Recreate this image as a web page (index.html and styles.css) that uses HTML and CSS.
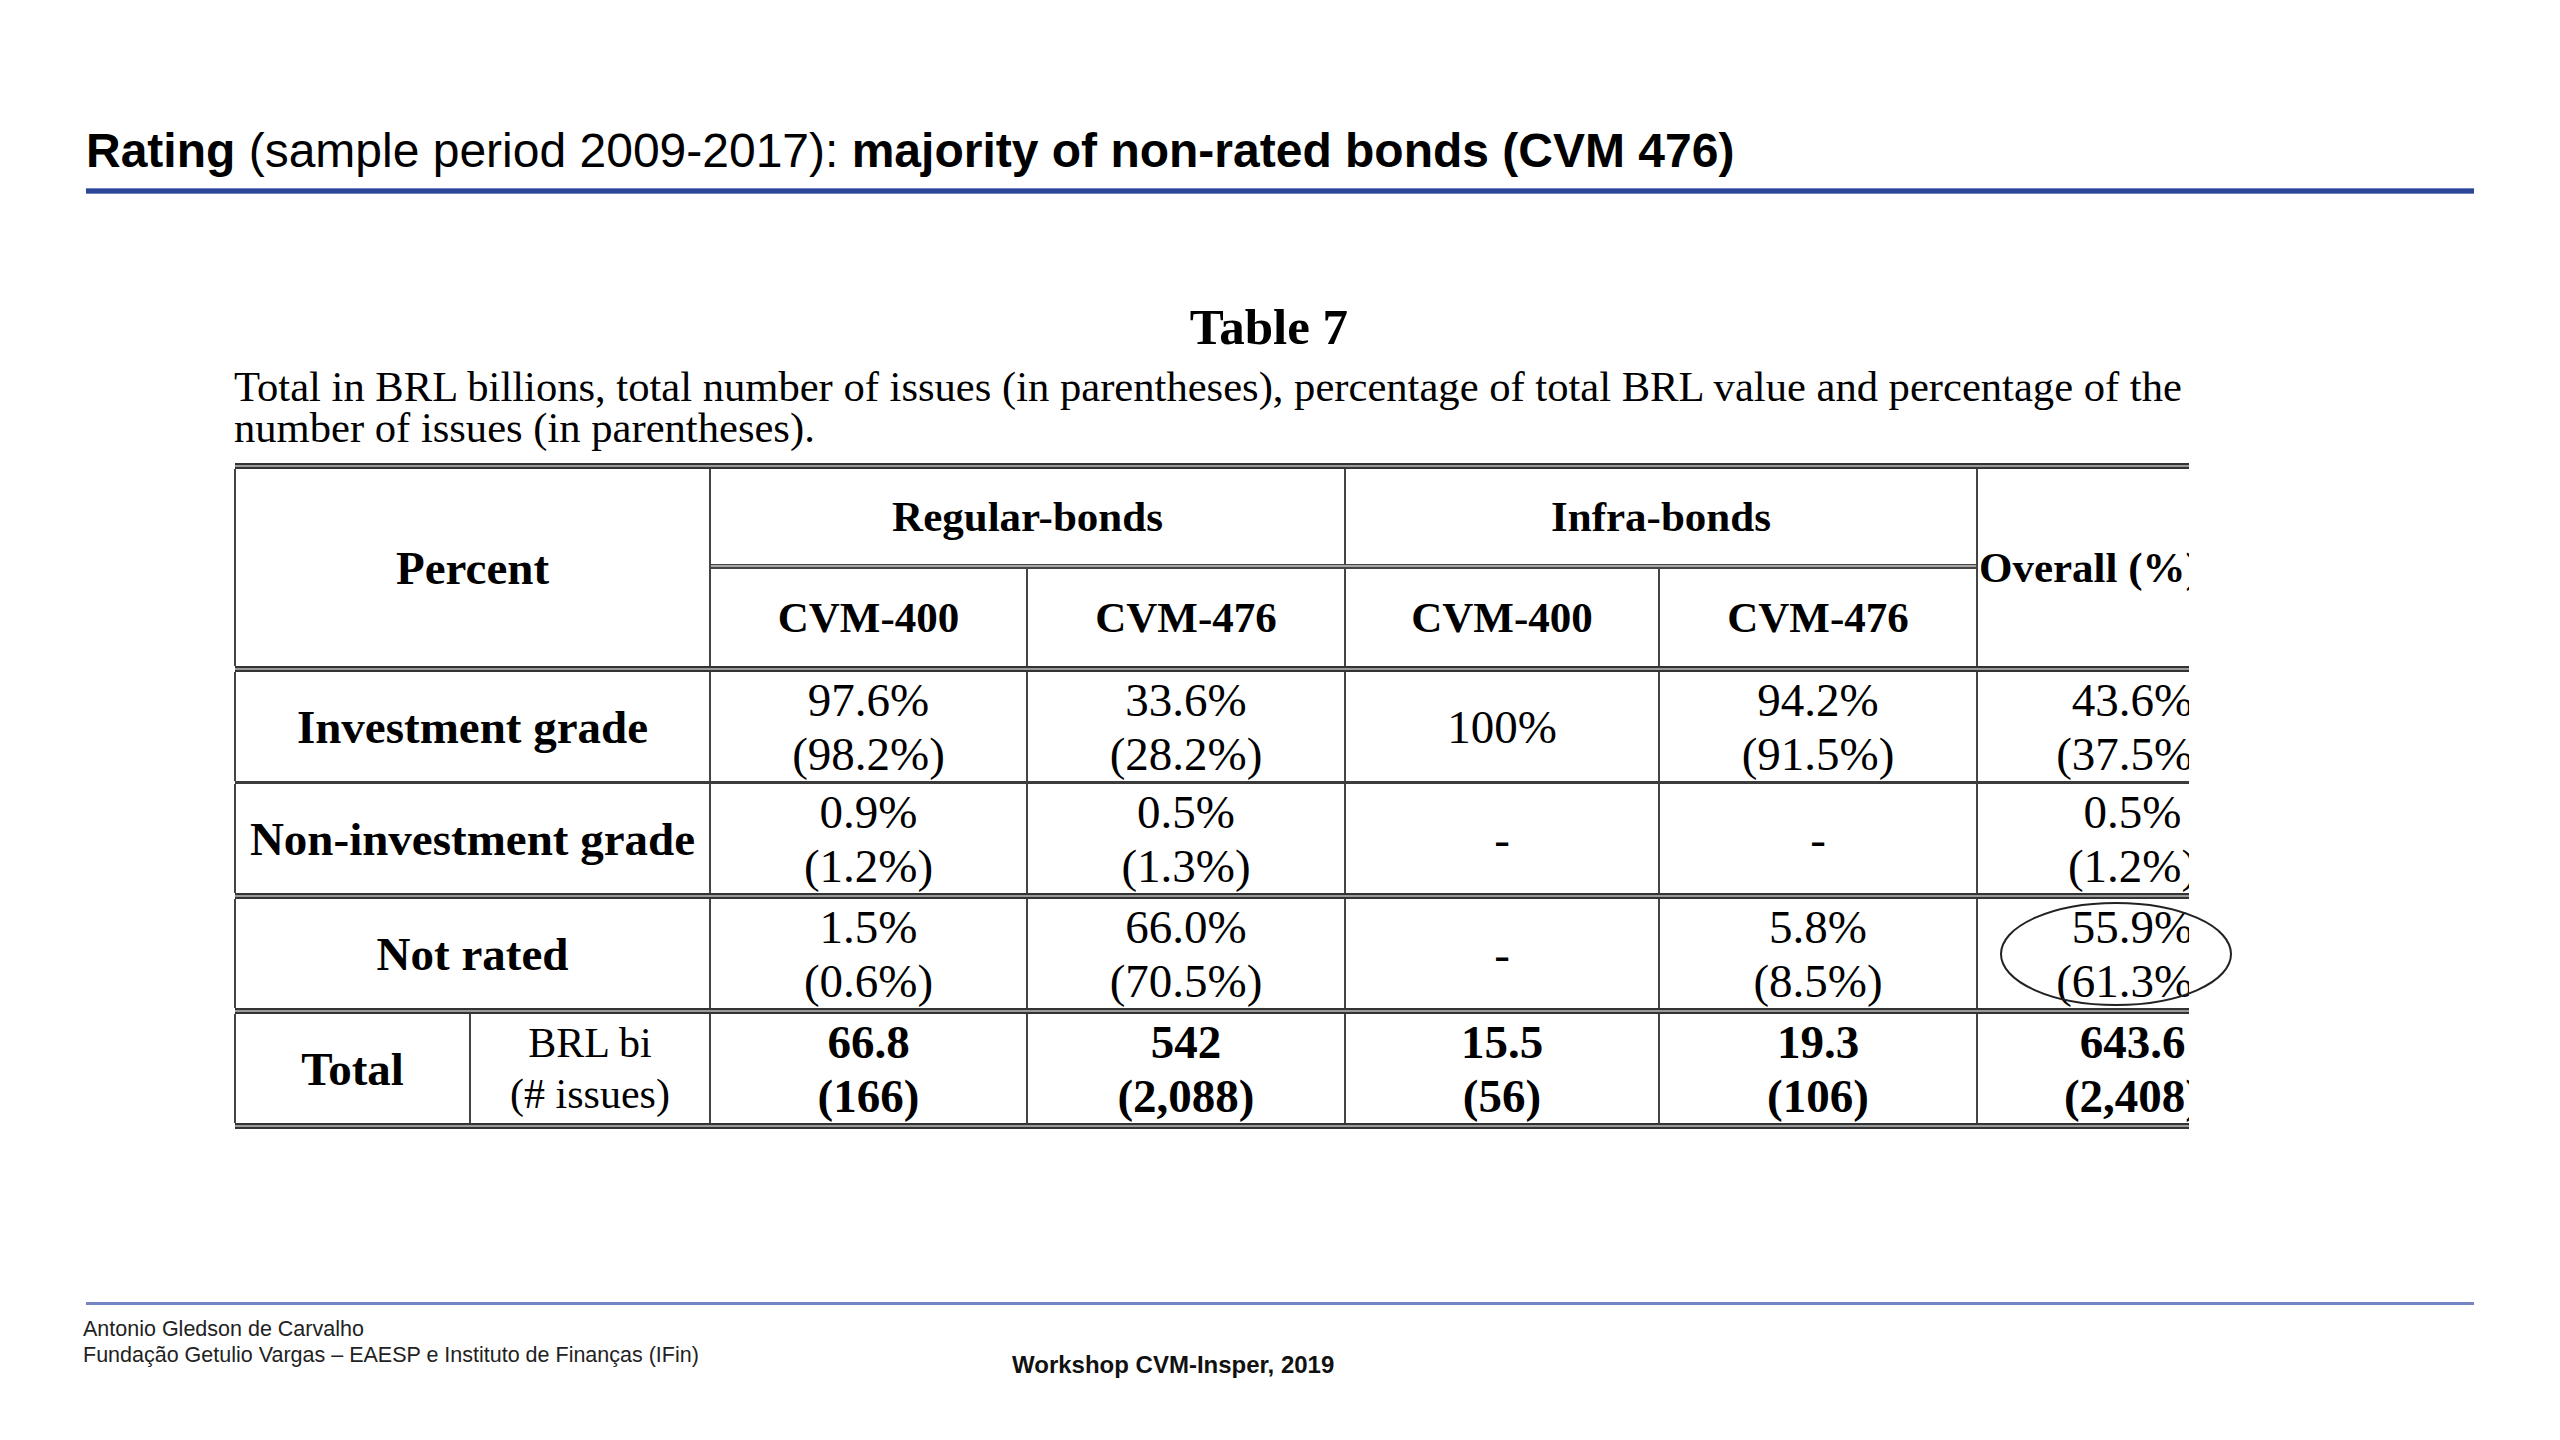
FILE: index.html
```html
<!DOCTYPE html>
<html lang="en">
<head>
<meta charset="utf-8">
<title>Rating - Table 7</title>
<link rel="stylesheet" href="styles.css">
</head>
<body>
<div class="slide">
  <h1 class="title"><b>Rating</b> (sample period 2009-2017): <b>majority of non-rated bonds (CVM 476)</b></h1>
  <div class="title-rule"></div>

  <div class="figure">
    <div class="clip">
      <div class="inner">
        <h2 class="fig-title">Table 7</h2>
        <p class="caption">Total in BRL billions, total number of issues (in parentheses), percentage of total BRL value and percentage of the total<br>number of issues (in parentheses).</p>
        <table class="data-table">
          <colgroup>
            <col class="c-a"><col class="c-b"><col class="c-c"><col class="c-d"><col class="c-e"><col class="c-f"><col class="c-g">
          </colgroup>
          <tr class="rule"><td colspan="7"></td></tr>
          <tr class="h1">
            <th colspan="2" rowspan="3" class="label">Percent</th>
            <th colspan="2">Regular-bonds</th>
            <th colspan="2">Infra-bonds</th>
            <th rowspan="3" class="overall">Overall (%)</th>
          </tr>
          <tr class="rule thin"><td colspan="4"></td></tr>
          <tr class="h2">
            <th>CVM-400</th><th>CVM-476</th><th>CVM-400</th><th>CVM-476</th>
          </tr>
          <tr class="rule"><td colspan="7"></td></tr>
          <tr class="row">
            <th colspan="2" class="label">Investment grade</th>
            <td>97.6%<br>(98.2%)</td>
            <td>33.6%<br>(28.2%)</td>
            <td>100%</td>
            <td>94.2%<br>(91.5%)</td>
            <td>43.6%<br>(37.5%)</td>
          </tr>
          <tr class="rule single"><td colspan="7"></td></tr>
          <tr class="row">
            <th colspan="2" class="label">Non-investment grade</th>
            <td>0.9%<br>(1.2%)</td>
            <td>0.5%<br>(1.3%)</td>
            <td>-</td>
            <td>-</td>
            <td>0.5%<br>(1.2%)</td>
          </tr>
          <tr class="rule"><td colspan="7"></td></tr>
          <tr class="row">
            <th colspan="2" class="label">Not rated</th>
            <td>1.5%<br>(0.6%)</td>
            <td>66.0%<br>(70.5%)</td>
            <td>-</td>
            <td>5.8%<br>(8.5%)</td>
            <td>55.9%<br>(61.3%)</td>
          </tr>
          <tr class="rule"><td colspan="7"></td></tr>
          <tr class="row total">
            <th class="label">Total</th>
            <td class="unit">BRL bi<br>(# issues)</td>
            <td>66.8<br>(166)</td>
            <td>542<br>(2,088)</td>
            <td>15.5<br>(56)</td>
            <td>19.3<br>(106)</td>
            <td>643.6<br>(2,408)</td>
          </tr>
          <tr class="rule"><td colspan="7"></td></tr>
        </table>
      </div>
    </div>
    <svg class="circle" viewBox="0 0 234 106" width="234" height="106" aria-hidden="true">
      <ellipse cx="117" cy="53" rx="115" ry="51" fill="none" stroke="#222" stroke-width="2"/>
    </svg>
  </div>

  <div class="footer-rule"></div>
  <div class="footer">
    <div class="footer-left">
      <div>Antonio Gledson de Carvalho</div>
      <div>Fundação Getulio Vargas – EAESP e Instituto de Finanças (IFin)</div>
    </div>
    <div class="footer-right">Workshop CVM-Insper, 2019</div>
  </div>
</div>
</body>
</html>
```

FILE: styles.css
```css
html, body {
  margin: 0;
  padding: 0;
  background: #ffffff;
}

body {
  width: 2560px;
  height: 1440px;
  overflow: hidden;
  color: #000;
}

.slide {
  padding: 123px 86px 0;
}

.title {
  margin: 0;
  font-family: "Liberation Sans", Arial, sans-serif;
  font-weight: 400;
  font-size: 48px;
  line-height: 56px;
  white-space: nowrap;
  color: #000;
}

.title b {
  font-weight: 700;
}

.title-rule {
  margin-top: 9px;
  height: 6px;
  background: linear-gradient(#8ea0d2 0, #2b4696 1.5px, #2b4696 4.5px, #8ea0d2 6px);
}

.figure {
  position: relative;
  margin: 103px 0 0 148px;
  width: 1955px;
}

.clip {
  overflow: hidden;
}

.inner {
  width: 2070px;
  font-family: "Liberation Serif", "Times New Roman", serif;
}

.fig-title {
  margin: 0;
  text-align: center;
  font-weight: 700;
  font-size: 51px;
  line-height: 60px;
}

.caption {
  margin: 9px 0 0;
  font-size: 42.6px;
  line-height: 41px;
  white-space: nowrap;
}

.data-table {
  margin-top: 15px;
  border-collapse: collapse;
  table-layout: fixed;
  width: 2052px;
}

.c-a { width: 235px; }
.c-b { width: 240px; }
.c-c { width: 317px; }
.c-d { width: 318px; }
.c-e { width: 314px; }
.c-f { width: 318px; }
.c-g { width: 310px; }

.data-table th,
.data-table td {
  padding: 0;
  border-left: 2px solid #444;
  text-align: center;
  vertical-align: middle;
  white-space: nowrap;
  overflow: hidden;
}

.data-table tr.rule td {
  border-left: none;
  height: 6px;
  font-size: 0;
  line-height: 0;
  background: linear-gradient(#333 0 2px, #9a9a9a 2px 4px, #333 4px 6px);
}

.data-table tr.rule.thin td {
  border-left: 2px solid #444;
  height: 5px;
  background: linear-gradient(#444 0 1.5px, #a8a8a8 1.5px 3.5px, #444 3.5px 5px);
}

.data-table tr.rule.single td {
  height: 3px;
  background: #3c3c3c;
}

.h1 th,
.h2 th {
  font-weight: 700;
  font-size: 43px;
  line-height: 50px;
}

.h1 th {
  height: 95px;
}

.h2 th {
  height: 97px;
}

.data-table th.label {
  font-weight: 700;
  font-size: 47px;
  line-height: 54px;
}

.data-table th.overall {
  text-align: left;
  padding-left: 1px;
  overflow: visible;
}

.row td {
  height: 109px;
  font-size: 47px;
  line-height: 54px;
}

.row.total td {
  font-weight: 700;
}

.row.total td.unit {
  font-weight: 400;
  font-size: 42px;
  line-height: 51px;
}

.circle {
  position: absolute;
  left: 1765px;
  top: 604px;
  width: 234px;
  height: 106px;
}

.footer-rule {
  margin-top: 173px;
  height: 3px;
  background: #7485c3;
}

.footer {
  display: grid;
  grid-template-columns: 929px auto;
  margin-left: -3px;
  font-family: "Liberation Sans", Arial, sans-serif;
}

.footer-left {
  padding-top: 11px;
  font-size: 21.5px;
  line-height: 26px;
  color: #222;
}

.footer-right {
  padding-top: 47px;
  font-size: 24px;
  line-height: 26px;
  font-weight: 700;
  color: #111;
}
```
